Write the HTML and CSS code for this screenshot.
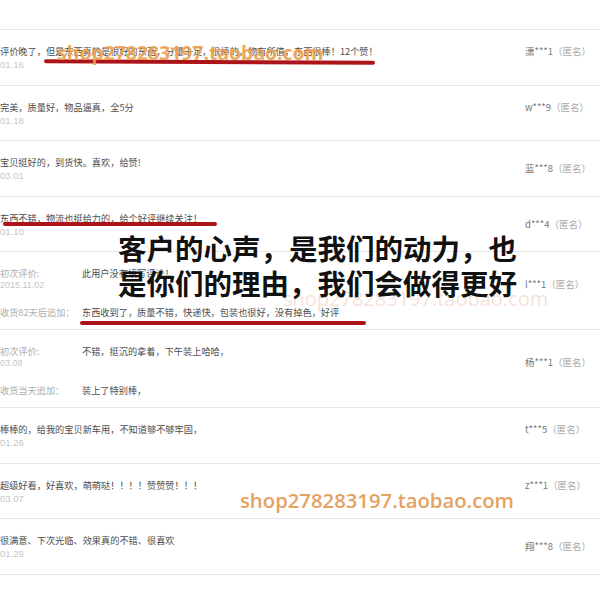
FILE: index.html
```html
<!DOCTYPE html>
<html lang="zh-CN">
<head>
  <meta charset="UTF-8">
  <title>宝贝评价</title>
  <link rel="stylesheet" href="styles.css">
</head>
<body>
  <div class="page">
    <div class="list">
      <div class="row">
        <div class="main">
          <div class="text">评价晚了，但是东西真的是很好的东西，分量十足，很棒的，物有所值，东西很棒！12个赞！</div>
          <div class="date">01.16</div>
        </div>
        <div class="name">潇***1<span class="anon">（匿名）</span></div>
      </div>
      <div class="row">
        <div class="main">
          <div class="text">完美，质量好，物品逼真，全5分</div>
          <div class="date">01.18</div>
        </div>
        <div class="name">w***9<span class="anon">（匿名）</span></div>
      </div>
      <div class="row">
        <div class="main">
          <div class="text">宝贝挺好的，到货快。喜欢，给赞!</div>
          <div class="date">03.01</div>
        </div>
        <div class="name low">蓝***8<span class="anon">（匿名）</span></div>
      </div>
      <div class="row">
        <div class="main">
          <div class="text">东西不错，物流也挺给力的，给个好评继续关注！</div>
          <div class="date">01.10</div>
        </div>
        <div class="name low">d***4<span class="anon">（匿名）</span></div>
      </div>
      <div class="row double">
        <div class="main">
          <div class="pair"><span class="label">初次评价:</span><span class="text">此用户没有填写评论！</span></div>
          <div class="date">2015.11.02</div>
          <div class="pair append"><span class="label">收货82天后追加：</span><span class="text">东西收到了，质量不错，快递快，包装也很好，没有掉色，好评</span></div>
        </div>
        <div class="name mid">l***1<span class="anon">（匿名）</span></div>
      </div>
      <div class="row double">
        <div class="main">
          <div class="pair"><span class="label">初次评价:</span><span class="text">不错，挺沉的拿着，下午装上哈哈，</span></div>
          <div class="date">03.08</div>
          <div class="pair append"><span class="label">收货当天追加：</span><span class="text">装上了特别棒，</span></div>
        </div>
        <div class="name mid">杨***1<span class="anon">（匿名）</span></div>
      </div>
      <div class="row">
        <div class="main">
          <div class="text">棒棒的，给我的宝贝新车用，不知道够不够牢固，</div>
          <div class="date">01.26</div>
        </div>
        <div class="name">t***5<span class="anon">（匿名）</span></div>
      </div>
      <div class="row">
        <div class="main">
          <div class="text">超级好看，好喜欢，萌萌哒！！！！赞赞赞！！！</div>
          <div class="date">03.07</div>
        </div>
        <div class="name">z***1<span class="anon">（匿名）</span></div>
      </div>
      <div class="row">
        <div class="main">
          <div class="text">很满意、下次光临、效果真的不错、很喜欢</div>
          <div class="date">01.29</div>
        </div>
        <div class="name low">翔***8<span class="anon">（匿名）</span></div>
      </div>
    </div>

    <!-- annotations drawn over the screenshot -->
    <div class="mark mark-1"></div>
    <div class="mark mark-2"></div>
    <div class="mark mark-3"></div>

    <div class="wm wm-top">shop278283197.taobao.com</div>
    <div class="wm wm-mid">shop278283197.taobao.com</div>
    <div class="wm wm-bottom">shop278283197.taobao.com</div>

    <div class="slogan">客户的心声，是我们的动力，也<br>是你们的理由，我们会做得更好</div>
  </div>
</body>
</html>
```

FILE: styles.css
```css
body {
  margin: 0;
  background: #fff;
  font-family: "Noto Sans CJK SC", sans-serif;
  color: #4d4d4d;
}

.page {
  position: relative;
  width: 600px;
  height: 600px;
  overflow: hidden;
  padding-top: 29px;
  box-sizing: border-box;
}

.list {
  border-top: 1px solid #e6e6e6;
}

.row {
  display: flex;
  padding: 14px 0 12.5px;
  border-bottom: 1px solid #e6e6e6;
}

.main {
  flex: 1;
  font-size: 9.2px;
  line-height: 14px;
}

.date {
  font-family: "Liberation Sans", sans-serif;
  font-size: 9.5px;
  color: #c6c6c6;
}

.name {
  flex: 0 0 75px;
  font-size: 9.5px;
  line-height: 14px;
  color: #777;
}

.name .anon {
  color: #aaa;
}

.name.low {
  padding-top: 6px;
}

.name.mid {
  padding-top: 10px;
}

/* rows with a first review and a follow-up */
.row.double {
  padding: 14.5px 0 11.5px;
}

.row.double .main {
  line-height: 12px;
}

.row.double .date {
  font-size: 9px;
}

.pair {
  display: flex;
}

.pair .label {
  flex: 0 0 82px;
  color: #adadad;
}

.append {
  margin-top: 15px;
}

.mark {
  position: absolute;
  height: 4px;
  border-radius: 2px;
  background: #ad1419;
}

.mark-1 {
  left: 44px;
  top: 60px;
  width: 331px;
  transform: rotate(0.3deg);
}

.mark-2 {
  left: 3px;
  top: 222px;
  width: 214px;
}

.mark-3 {
  left: 80px;
  top: 320.5px;
  width: 286px;
}

.wm {
  position: absolute;
  font-family: "Open Sans", sans-serif;
  line-height: 20px;
  white-space: nowrap;
}

.wm-top {
  left: 57px;
  top: 43px;
  font-size: 19.4px;
  font-weight: 700;
  color: rgba(238, 160, 80, 0.92);
}

.wm-mid {
  left: 283px;
  top: 289px;
  font-size: 20px;
  color: rgba(225, 150, 125, 0.3);
}

.wm-bottom {
  left: 240px;
  top: 490px;
  font-size: 20.3px;
  font-weight: 600;
  color: #e4a15f;
}

.slogan {
  position: absolute;
  left: 118px;
  top: 230px;
  font-size: 28.5px;
  line-height: 35px;
  font-weight: 700;
  color: #111;
  white-space: nowrap;
}
```
